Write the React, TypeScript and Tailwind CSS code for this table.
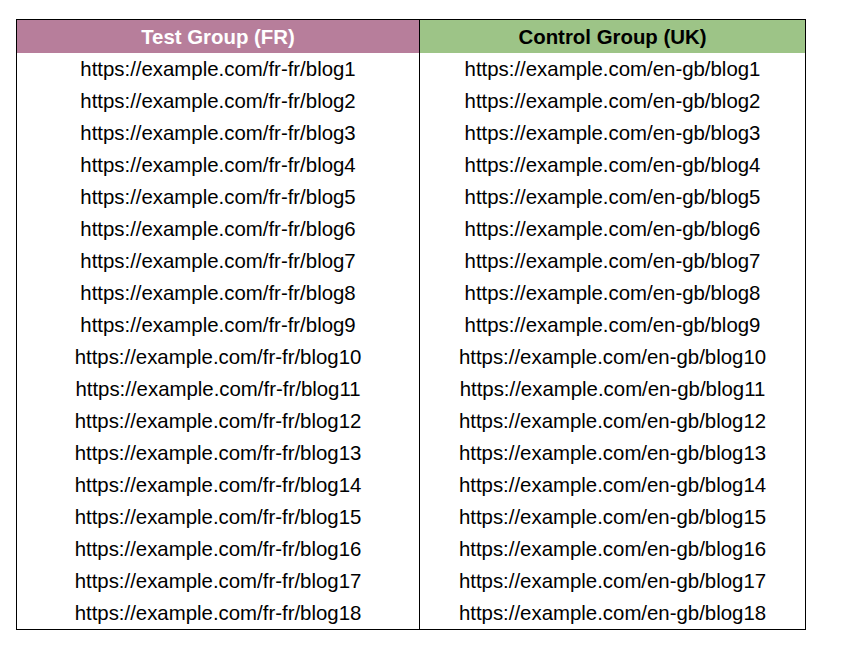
import React from 'react';

const rows = Array.from({ length: 18 }, (_, i) => i + 1);

export default function App() {
  return (
    <div className="w-[842px] h-[652px] bg-white pt-[19px] pl-4 font-['Liberation_Sans',Arial,sans-serif] text-black">
      <div className="w-[790px] border border-black grid grid-cols-[403px_1fr]">
        <div className="h-[33px] pt-px bg-[#b77e9b] border-r border-black flex items-center justify-center text-white font-bold text-[20.4px]">
          Test Group (FR)
        </div>
        <div className="h-[33px] pt-px bg-[#9dc487] flex items-center justify-center font-bold text-[20.4px]">
          Control Group (UK)
        </div>
        {rows.map((n) => (
          <React.Fragment key={n}>
            <div className="h-8 pt-px border-r border-black flex items-center justify-center text-[20.4px]">
              https://example.com/fr-fr/blog{n}
            </div>
            <div className="h-8 pt-px flex items-center justify-center text-[20.4px]">
              https://example.com/en-gb/blog{n}
            </div>
          </React.Fragment>
        ))}
      </div>
    </div>
  );
}
